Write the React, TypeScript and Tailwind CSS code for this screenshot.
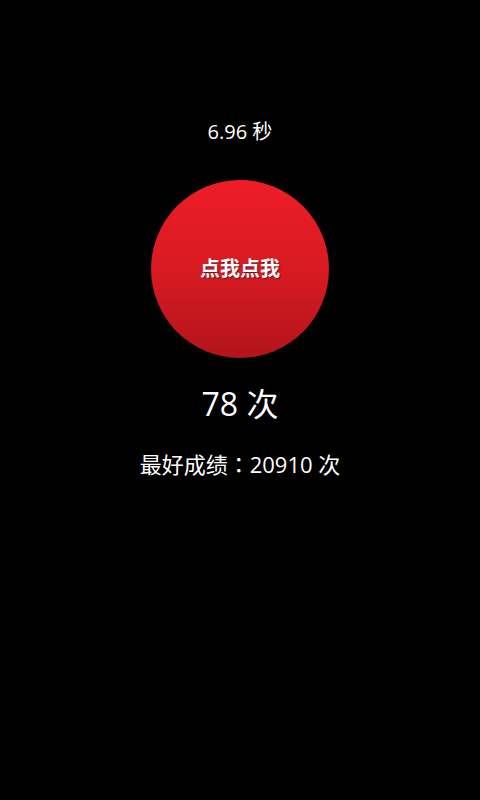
import React from "react";

export default function App() {
  return (
    <div
      className="w-[480px] h-[800px] bg-black flex flex-col items-center text-white"
      style={{ fontFamily: '"Open Sans", "Noto Sans CJK SC", sans-serif' }}
    >
      <div className="mt-[118px] h-[28px] leading-[28px] text-[20px]">6.96 秒</div>
      <button
        className="mt-[34px] w-[178px] h-[178px] rounded-full flex items-center justify-center bg-[linear-gradient(to_bottom,#ee1d26_0%,#d81a22_50%,#b3141b_100%)]"
      >
        <span className="text-[20px] font-bold text-white [text-shadow:1px_1px_1px_rgba(0,0,0,0.45)]">
          点我点我
        </span>
      </button>
      <div className="mt-[26px] h-[40px] leading-[40px] text-[32px]">78 次</div>
      <div className="mt-[24px] h-[30px] leading-[30px] text-[22px]">
        最好成绩
        <span style={{ fontFamily: '"Noto Sans CJK TC", sans-serif' }}>：</span>
        20910 次
      </div>
    </div>
  );
}
